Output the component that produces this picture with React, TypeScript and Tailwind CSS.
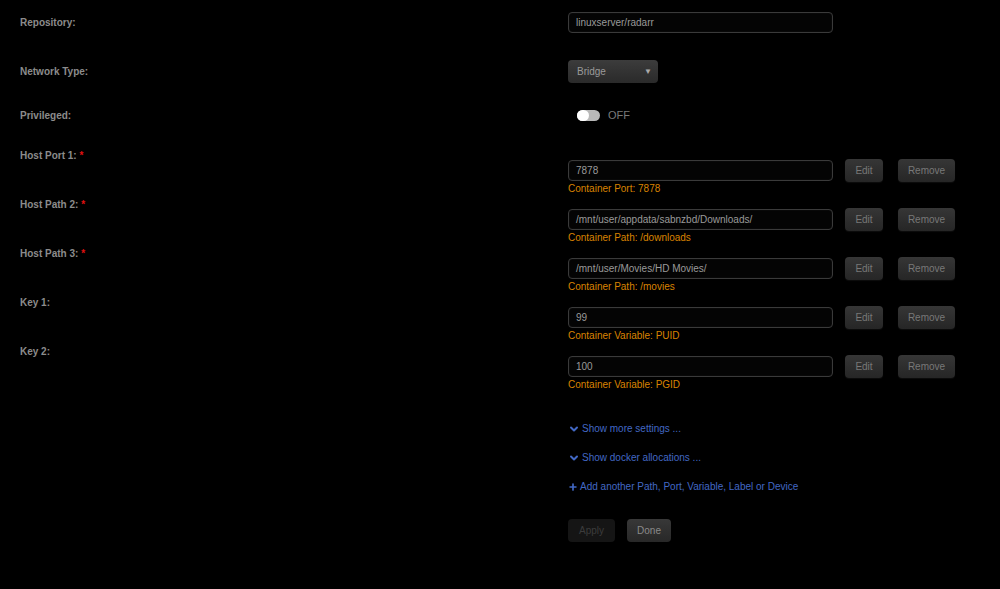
import { ChevronDown, Plus } from "lucide-react";

const mappings = [
  { label: "Host Port 1:", value: "7878", note: "Container Port: 7878", required: true },
  { label: "Host Path 2:", value: "/mnt/user/appdata/sabnzbd/Downloads/", note: "Container Path: /downloads", required: true },
  { label: "Host Path 3:", value: "/mnt/user/Movies/HD Movies/", note: "Container Path: /movies", required: true },
  { label: "Key 1:", value: "99", note: "Container Variable: PUID" },
  { label: "Key 2:", value: "100", note: "Container Variable: PGID" },
];

const labelCls = "text-[10px] leading-[13px] font-bold text-[#8c8c8c]";
const inputCls =
  "flex h-[21px] w-[265px] items-center rounded-[4px] border border-[#3a3a3a] bg-[#040404] px-[7px] text-[10px] text-[#9a9a9a] shadow-[inset_0_0_2px_rgba(255,255,255,0.08)]";
const btnCls =
  "flex h-[23px] items-center justify-center rounded-[4px] bg-gradient-to-b from-[#363636] to-[#262626] text-[10px] text-[#787878] shadow-[0_1px_1px_rgba(255,255,255,0.05)]";

function Row({ label, children, className }: { label: React.ReactNode; children: React.ReactNode; className?: string }) {
  return (
    <div className={`grid grid-cols-[548px_1fr] ${className ?? ""}`}>
      <div className={labelCls}>{label}</div>
      <div>{children}</div>
    </div>
  );
}

function Link({ icon, text, className }: { icon: React.ReactNode; text: string; className?: string }) {
  return (
    <div className={`ml-[548px] flex h-[13px] items-center gap-[2px] text-[10px] leading-[13px] text-[#4268c4] ${className ?? ""}`}>
      {icon}
      <span>{text}</span>
    </div>
  );
}

export default function App() {
  return (
    <div
      className="h-[589px] w-[1000px] overflow-hidden bg-black px-5 pt-[12px]"
      style={{ fontFamily: '"Liberation Sans", Arial, sans-serif' }}
    >
      <div className="grid grid-cols-[548px_1fr] items-center">
        <div className={labelCls}>Repository:</div>
        <div className={inputCls}>linuxserver/radarr</div>
      </div>

      <div className="mt-[27px] grid grid-cols-[548px_1fr] items-center">
        <div className={labelCls}>Network Type:</div>
        <div className="flex h-[23px] w-[90px] items-center justify-between rounded-[4px] bg-gradient-to-b from-[#3c3c3c] to-[#2a2a2a] pl-[9px] pr-[6px] text-[10px] text-[#9a9a9a]">
          <span>Bridge</span>
          <span className="text-[8px] text-[#aaa]">▼</span>
        </div>
      </div>

      <div className="mt-[24px] grid h-[11px] grid-cols-[548px_1fr] items-center">
        <div className={labelCls}>Privileged:</div>
        <div className="flex items-center">
          <div className="ml-[9px] flex h-[11px] w-[23px] items-center rounded-full bg-[#b8b8b8]">
            <div className="h-[11px] w-[12px] rounded-full bg-white" />
          </div>
          <span className="ml-[8px] text-[11px] text-[#7a7a7a]">OFF</span>
        </div>
      </div>

      <div className="mt-[31px]">
        {mappings.map((m) => (
          <Row
            key={m.label}
            className="h-[49px]"
            label={
              <>
                {m.label} {m.required && <span className="text-[#e01010]">*</span>}
              </>
            }
          >
            <div className="mt-[10px] flex items-center">
              <div className={inputCls}>{m.value}</div>
              <div className={`${btnCls} ml-[12px] w-[38px]`}>Edit</div>
              <div className={`${btnCls} ml-[15px] w-[57px]`}>Remove</div>
            </div>
            <div className="text-[10px] leading-[13px] text-[#d98300]">{m.note}</div>
          </Row>
        ))}
      </div>

      <Link className="mt-[28px]" icon={<ChevronDown size={12} strokeWidth={4} />} text="Show more settings ..." />
      <Link className="mt-[16px]" icon={<ChevronDown size={12} strokeWidth={4} />} text="Show docker allocations ..." />
      <Link className="mt-[16px]" icon={<Plus size={10} strokeWidth={4} />} text="Add another Path, Port, Variable, Label or Device" />

      <div className="ml-[548px] mt-[26px] flex gap-[12px]">
        <div className="flex h-[23px] w-[47px] items-center justify-center rounded-[4px] bg-[#151515] text-[10px] text-[#3c3c3c]">
          Apply
        </div>
        <div className="flex h-[23px] w-[44px] items-center justify-center rounded-[4px] bg-gradient-to-b from-[#383838] to-[#282828] text-[10px] text-[#8a8a8a]">
          Done
        </div>
      </div>
    </div>
  );
}
